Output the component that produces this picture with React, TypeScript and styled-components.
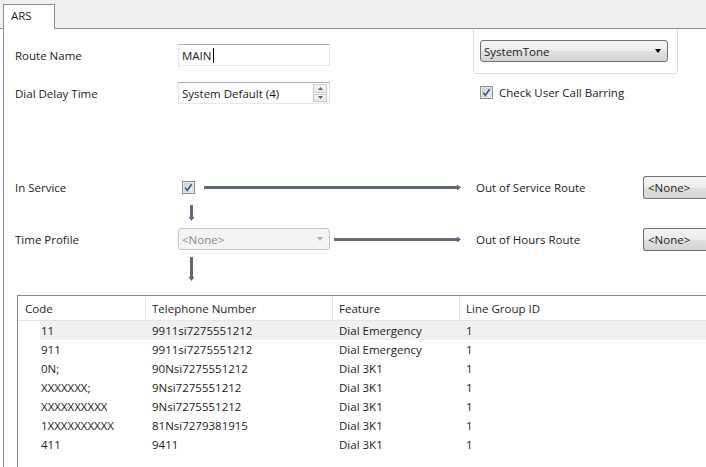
import React from "react";
import styled, { createGlobalStyle } from "styled-components";

const GlobalStyle = createGlobalStyle`
  html, body {
    margin: 0;
    padding: 0;
    background: #ffffff;
    overflow: hidden;
  }
  body {
    font-family: "Open Sans", "Noto Sans", sans-serif;
    font-size: 11.5px;
    color: #1b1b1b;
  }
`;

const Window = styled.div`
  width: 706px;
  height: 467px;
  display: flex;
  flex-direction: column;
  overflow: hidden;
`;

const TabStrip = styled.div`
  height: 28px;
  background: #f0f0f0;
  display: flex;
  align-items: flex-end;
  padding-left: 3px;
  border-bottom: 1px solid #898c95;
`;

const Tab = styled.div`
  width: 52px;
  height: 25px;
  background: #ffffff;
  border: 1px solid #898c95;
  border-bottom: none;
  margin-bottom: -1px;
  box-sizing: border-box;
  padding: 3px 0 0 7px;
`;

const Panel = styled.div`
  flex: 1;
  margin-left: 3px;
  border-left: 1px solid #898c95;
  padding-left: 11px;
  display: flex;
  flex-direction: column;
`;

const TopSection = styled.div`
  display: flex;
  align-items: flex-start;
`;

const FormGrid = styled.div`
  display: grid;
  grid-template-columns: 163px 152px;
  grid-auto-rows: 22px;
  row-gap: 16px;
  padding-top: 15px;
  align-items: center;
`;

const Label = styled.div`
  white-space: nowrap;
  grid-column: 1;
`;

const TextBox = styled.div`
  height: 22px;
  box-sizing: border-box;
  border: 1px solid #abadb3;
  border-color: #abadb3 #dbdfe6 #e3e9ef #e2e3ea;
  padding: 2px 3px;
  display: flex;
  align-items: center;
`;

const Caret = styled.span`
  display: inline-block;
  width: 1px;
  height: 15px;
  background: #000;
  margin-left: 1px;
`;

const SpinButtons = styled.div`
  margin-left: auto;
  width: 14px;
  height: 18px;
  display: flex;
  flex-direction: column;
  gap: 1px;
  margin-right: -1px;
`;

const SpinButton = styled.div`
  flex: 1;
  border: 1px solid #c9cbd0;
  background: linear-gradient(#f6f6f6, #e7e8ea);
  display: flex;
  align-items: center;
  justify-content: center;
`;

const RightColumn = styled.div`
  margin-left: 143px;
  display: flex;
  flex-direction: column;
`;

const GroupBox = styled.div`
  width: 205px;
  box-sizing: border-box;
  border: 1px solid #dcdcdc;
  border-top: none;
  border-radius: 0 0 4px 4px;
  padding: 11px 9px 11px 6px;
`;

interface DropProps {
  disabled?: boolean;
}

const DropDown = styled.div<DropProps>`
  height: 22px;
  box-sizing: border-box;
  border: 1px solid ${(p) => (p.disabled ? "#c3c5c8" : "#707070")};
  border-radius: 3px;
  background: ${(p) =>
    p.disabled
      ? "#f4f4f4"
      : "linear-gradient(#f4f4f4 0%, #ececec 50%, #e0e0e0 51%, #d4d4d4 100%)"};
  color: ${(p) => (p.disabled ? "#8a8a8a" : "#1b1b1b")};
  display: flex;
  align-items: center;
  padding: 0 6px 0 3px;
`;

const DropArrow = styled.div<DropProps>`
  margin-left: auto;
  width: 0;
  height: 0;
  border-left: 3.5px solid transparent;
  border-right: 3.5px solid transparent;
  border-top: 4px solid ${(p) => (p.disabled ? "#b0b0b0" : "#000")};
`;

const CheckRow = styled.div`
  display: flex;
  align-items: center;
  gap: 6px;
  padding: 11px 0 0 7px;
`;

const RouteGrid = styled.div`
  margin-top: 72px;
  display: grid;
  grid-template-columns: 163px 283px 15px 167px 1fr;
  grid-template-rows: 23px 29px 22px 45px;
  align-items: center;
`;

const ControlWithArrow = styled.div`
  grid-column: 2;
  display: flex;
  align-items: center;
`;

const CheckCell = styled.div`
  padding-left: 4px;
  margin-right: 9px;
  display: flex;
  align-items: center;
`;

const HLine = styled.svg`
  flex: 1;
  height: 7px;
`;

const DownCell = styled.div`
  grid-column: 2;
  align-self: stretch;
  padding-left: 10px;
  display: flex;
`;

const ProfileDropDown = styled(DropDown)`
  width: 152px;
  margin-right: 4px;
`;

const RouteLabel = styled(Label)`
  grid-column: 4;
`;

const RouteSelect = styled(DropDown)`
  grid-column: 5;
  border-radius: 3px 0 0 3px;
  border-right: none;
  padding-left: 4px;
  height: 23px;
`;

const Table = styled.div`
  margin-left: 2px;
  width: 720px;
  flex: 1;
  border: 1px solid #828790;
  border-right: none;
  border-bottom: none;
`;

const HeaderRow = styled.div`
  display: grid;
  grid-template-columns: 128px 187px 127px 1fr;
  height: 24px;
  border-bottom: 1px solid #e5e5e5;
`;

interface HeadProps {
  first?: boolean;
}

const HeaderCell = styled.div<HeadProps>`
  display: flex;
  align-items: center;
  padding-left: ${(p) => (p.first ? "7px" : "6px")};
  border-right: 1px solid #e5e5e5;
  color: #1e1e1e;
`;

interface RowProps {
  selected?: boolean;
}

const DataRow = styled.div<RowProps>`
  display: grid;
  grid-template-columns: 105px 187px 127px 1fr;
  height: 19px;
  margin-left: 22px;
  align-items: center;
  background: ${(p) => (p.selected ? "#f0f0f0" : "transparent")};
`;

const Cell = styled.div`
  padding-left: 7px;
  white-space: nowrap;
  &:first-child {
    padding-left: 1px;
  }
`;

const arrowColor = "#5f6978";

function CheckBox() {
  return (
    <svg width="13" height="13" viewBox="0 0 13 13">
      <defs>
        <linearGradient id="cbg" x1="0" y1="0" x2="1" y2="1">
          <stop offset="0" stopColor="#cbcfd5" />
          <stop offset="1" stopColor="#f4f5f7" />
        </linearGradient>
      </defs>
      <rect x="0.5" y="0.5" width="12" height="12" fill="#f4f4f4" stroke="#8e8f8f" />
      <rect x="2" y="2" width="9" height="9" fill="url(#cbg)" stroke="#bfc4cc" strokeWidth="0.6" />
      <path d="M3.3 6.6 L5.3 9.4 L9.6 3.2" fill="none" stroke="#3b4f84" strokeWidth="1.6" />
    </svg>
  );
}

function RightArrow() {
  return (
    <>
      <HLine viewBox="0 0 100 7" preserveAspectRatio="none">
        <rect x="0" y="2" width="100" height="3" fill={arrowColor} />
      </HLine>
      <svg width="4" height="7" viewBox="0 0 4 7">
        <path d="M0 0.5 L4 3.5 L0 6.5 Z" fill={arrowColor} />
      </svg>
    </>
  );
}

function DownArrow({ top, length }: { top: number; length: number }) {
  return (
    <svg width="7" height={top + length} viewBox={`0 0 7 ${top + length}`}>
      <rect x="2" y={top} width="3" height={length - 3} fill={arrowColor} />
      <path d={`M0.5 ${top + length - 4} L6.5 ${top + length - 4} L3.5 ${top + length} Z`} fill={arrowColor} />
    </svg>
  );
}

const rows = [
  ["11", "9911si7275551212", "Dial Emergency", "1"],
  ["911", "9911si7275551212", "Dial Emergency", "1"],
  ["0N;", "90Nsi7275551212", "Dial 3K1", "1"],
  ["XXXXXXX;", "9Nsi7275551212", "Dial 3K1", "1"],
  ["XXXXXXXXXX", "9Nsi7275551212", "Dial 3K1", "1"],
  ["1XXXXXXXXXX", "81Nsi7279381915", "Dial 3K1", "1"],
  ["411", "9411", "Dial 3K1", "1"],
];

export default function App() {
  return (
    <Window>
      <GlobalStyle />
      <TabStrip>
        <Tab>ARS</Tab>
      </TabStrip>
      <Panel>
        <TopSection>
          <FormGrid>
            <Label>Route Name</Label>
            <TextBox>
              MAIN
              <Caret />
            </TextBox>
            <Label>Dial Delay Time</Label>
            <TextBox>
              System Default (4)
              <SpinButtons>
                <SpinButton>
                  <svg width="5" height="3" viewBox="0 0 5 3">
                    <path d="M0 3 L2.5 0 L5 3 Z" fill="#4d6185" />
                  </svg>
                </SpinButton>
                <SpinButton>
                  <svg width="5" height="3" viewBox="0 0 5 3">
                    <path d="M0 0 L2.5 3 L5 0 Z" fill="#4d6185" />
                  </svg>
                </SpinButton>
              </SpinButtons>
            </TextBox>
          </FormGrid>
          <RightColumn>
            <GroupBox>
              <DropDown>
                SystemTone
                <DropArrow />
              </DropDown>
            </GroupBox>
            <CheckRow>
              <CheckBox />
              <span>Check User Call Barring</span>
            </CheckRow>
          </RightColumn>
        </TopSection>

        <RouteGrid>
          <Label>In Service</Label>
          <ControlWithArrow>
            <CheckCell>
              <CheckBox />
            </CheckCell>
            <RightArrow />
          </ControlWithArrow>
          <RouteLabel>Out of Service Route</RouteLabel>
          <RouteSelect>&lt;None&gt;</RouteSelect>

          <DownCell>
            <DownArrow top={6} length={16} />
          </DownCell>

          <Label>Time Profile</Label>
          <ControlWithArrow>
            <ProfileDropDown disabled>
              &lt;None&gt;
              <DropArrow disabled />
            </ProfileDropDown>
            <RightArrow />
          </ControlWithArrow>
          <RouteLabel>Out of Hours Route</RouteLabel>
          <RouteSelect>&lt;None&gt;</RouteSelect>

          <DownCell>
            <DownArrow top={7} length={24} />
          </DownCell>
        </RouteGrid>

        <Table>
          <HeaderRow>
            <HeaderCell first>Code</HeaderCell>
            <HeaderCell>Telephone Number</HeaderCell>
            <HeaderCell>Feature</HeaderCell>
            <HeaderCell>Line Group ID</HeaderCell>
          </HeaderRow>
          {rows.map((r, i) => (
            <DataRow key={i} selected={i === 0}>
              {r.map((c, j) => (
                <Cell key={j}>{c}</Cell>
              ))}
            </DataRow>
          ))}
        </Table>
      </Panel>
    </Window>
  );
}
